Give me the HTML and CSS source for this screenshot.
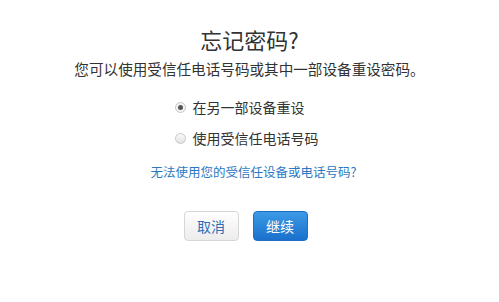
FILE: index.html
```html
<!DOCTYPE html>
<html lang="zh-CN">

<head>
    <meta charset="UTF-8">
    <meta name="viewport" content="width=device-width, initial-scale=1.0">
    <title>忘记密码</title>
    <link rel="stylesheet" href="styles.css">
</head>

<body>
    <div class="page">
        <h1 class="title">忘记密码?</h1>
        <p class="sub">您可以使用受信任电话号码或其中一部设备重设密码。</p>
        <div class="options">
            <label class="opt"><span class="radio on"></span>在另一部设备重设</label>
            <label class="opt"><span class="radio"></span>使用受信任电话号码</label>
        </div>
        <a class="help" href="#">无法使用您的受信任设备或电话号码?</a>
        <div class="btns">
            <button class="btn cancel">取消</button>
            <button class="btn go">继续</button>
        </div>
    </div>
</body>

</html>
```

FILE: styles.css
```css
*{
    margin: 0;
    padding: 0;
    box-sizing: border-box;
}
body{
    background: #fff;
    font-family: "Noto Sans CJK SC", "Liberation Sans", sans-serif;
    color: #333;
}
.page{
    display: flex;
    flex-direction: column;
    align-items: center;
    padding-top: 24px;
}
.title{
    font-size: 22px;
    font-weight: normal;
    line-height: 30px;
    color: #333;
}
.sub{
    font-size: 14.6px;
    line-height: 20px;
    margin-top: 5px;
    color: #333;
}
.options{
    display: flex;
    flex-direction: column;
    gap: 11px;
    margin-top: 18px;
    margin-right: 6px;
}
.opt{
    display: flex;
    align-items: center;
    font-size: 14px;
    line-height: 20px;
    color: #333;
}
.radio{
    width: 11px;
    height: 11px;
    border-radius: 50%;
    border: 1px solid #c8c8c8;
    background: linear-gradient(#fafafa, #e2e2e2);
    margin-right: 7px;
    display: flex;
    align-items: center;
    justify-content: center;
}
.radio.on{
    background: #f4f4f4;
}
.radio.on::after{
    content: "";
    width: 5px;
    height: 5px;
    border-radius: 50%;
    background: #555;
}
.help{
    margin-top: 15px;
    margin-left: 8px;
    font-size: 12.5px;
    line-height: 18px;
    color: #2a78c2;
    text-decoration: none;
}
.btns{
    display: flex;
    gap: 14px;
    margin-top: 30px;
    margin-right: 8px;
}
.btn{
    width: 55px;
    height: 30px;
    border-radius: 4px;
    font-family: inherit;
    font-size: 14px;
}
.cancel{
    border: 1px solid #d6d6d6;
    background: linear-gradient(#ffffff, #ececec);
    color: #2c6fb5;
}
.go{
    border: 1px solid #1f6fc4;
    background: linear-gradient(#3d9ae6, #1a70cc);
    color: #fff;
}
```
